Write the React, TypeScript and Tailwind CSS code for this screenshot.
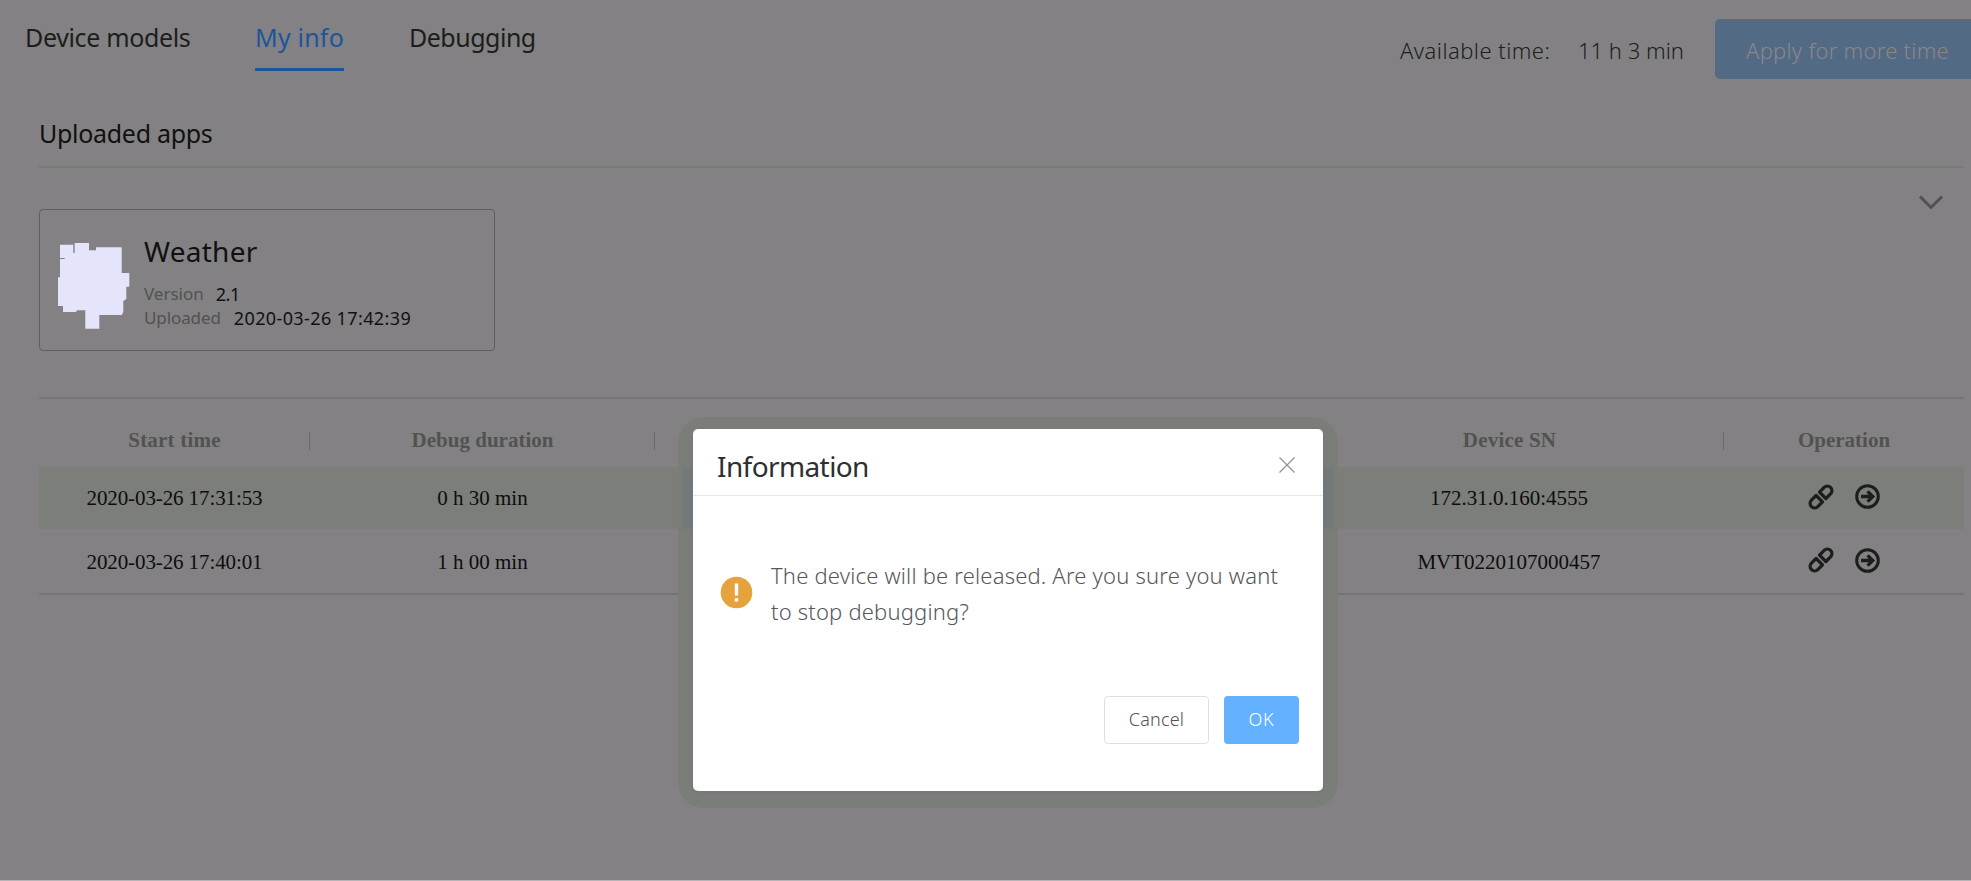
import type { ReactNode } from "react";

const sans = "font-['Noto_Sans',sans-serif]";
const serif = "font-['Liberation_Serif',serif]";

function LinkIcon() {
  return (
    <svg width="26" height="26" viewBox="-13 -13 26 26" fill="none" stroke="#1c1e1c" strokeWidth="3.3" strokeLinejoin="round">
      <g transform="rotate(-45)">
        <path d="M-2.4 -4.5H-9a4.5 4.5 0 0 0 0 9H-2.4Z" />
        <path d="M2.4 -4.5H9a4.5 4.5 0 0 1 0 9H2.4Z" />
      </g>
    </svg>
  );
}

function EnterIcon() {
  return (
    <svg width="25" height="25" viewBox="0 0 25 25" fill="none" stroke="#1c1e1c" strokeWidth="3">
      <circle cx="12.5" cy="12.5" r="10.8" />
      <path d="M6 12.5h11.5M12.6 7.300l5.200 5.200-5.200 5.200" strokeWidth="3.3" />
    </svg>
  );
}

function HeadCell({ children, last }: { children?: ReactNode; last?: boolean }) {
  return (
    <div className="relative flex justify-center pt-[29px] leading-6 font-bold text-[#50534f]">
      {children}
      {!last && <span className="absolute right-0 top-[33px] h-[18px] w-px bg-[#686b68]" />}
    </div>
  );
}

const columns = "grid grid-cols-[271px_345px_640px_429px_240px]";

function Row({ start, duration, sn, active }: { start: string; duration: string; sn: string; active?: boolean }) {
  return (
    <div className={`${columns} items-center justify-items-center text-[#0d0d0d] ${active ? "h-[62px] bg-[#7b7e79]" : "h-[64px] pt-px"}`}>
      <span className="tracking-[-0.1px]">{start}</span>
      <span>{duration}</span>
      <span />
      <span className="-ml-px">{sn}</span>
      <span className="-ml-px flex items-center gap-[21px] pb-[3px]">
        <LinkIcon />
        <EnterIcon />
      </span>
    </div>
  );
}

export default function App() {
  return (
    <div className={`relative h-[881px] w-[1971px] overflow-hidden border-b border-[#b5b3b5] bg-[#848184] ${sans}`}>
      <header className="flex h-[104px] items-start">
        <nav className="flex pt-[19px] text-[25px] leading-9 text-[#1b1e1b]">
          <a className="ml-[25px] w-[230px] tracking-[-0.35px]">Device models</a>
          <a className="mr-[65px] w-[89px] whitespace-nowrap border-b-[3px] border-[#1c559c] pb-[13px] tracking-[0.2px] text-[#1c559c]">My info</a>
          <a className="tracking-[-0.5px]">Debugging</a>
        </nav>
        <div className="ml-auto flex h-[60px] shrink-0 mt-[19px] text-[22px] leading-[62px] text-[#1b1e1b]">
          <span className="w-[178px] font-[350] tracking-[0.45px]">Available time:</span>
          <span className="w-[137px] font-[350] tracking-[0px]">11 h 3 min</span>
          <button className="-mr-2 w-[264px] rounded-[5px] bg-[#536a84] pl-[31px] text-left font-light tracking-[0.25px] text-[#8a8789]">Apply for more time</button>
        </div>
      </header>

      <main className="ml-[39px] w-[1925px]">
        <h2 className="h-[64px] border-b-2 border-[#777976] pt-[11px] text-[25px] leading-9 tracking-[-0.3px] text-[#101110]">Uploaded apps</h2>

        <section className="flex h-[229px] items-start justify-between pt-[41px]">
          <article className="flex h-[142px] w-[456px] rounded-[4px] border border-[#5f5d60] pl-[18px] pt-[23px]">
            <svg className="mt-[10px] shrink-0" width="72" height="86" viewBox="0 0 72 86" fill="#e4e4fa">
              <path d="M2 1.7H15.3V10h1.4V0H31V7.3h7V4.3H63.7V30H71.3V43.7H68.3V56L65.3 58V69L63.7 72H41.3V85.7H27.3V67.3H19L18 69H5V63H0V34.3H2V16H6.700V15H2Z" />
            </svg>
            <div className="ml-[14px] text-[17px] leading-6">
              <h3 className="text-[28px] leading-9 tracking-[0.25px] text-[#101110]">Weather</h3>
              <p className="mt-[13px] flex gap-[12px] text-[#50534f]">
                Version<span className="text-[18px] tracking-[-0.5px] text-[#101110]">2.1</span>
              </p>
              <p className="flex gap-[13px] text-[#50534f]">
                <span className="tracking-[-0.1px]">Uploaded</span>
                <span className="text-[18px] tracking-[0.38px] text-[#101110]">2020-03-26 17:42:39</span>
              </p>
            </div>
          </article>
          <svg className="mr-[20px] -mt-[15px]" width="26" height="16" viewBox="0 0 26 16" fill="none" stroke="#505250" strokeWidth="3">
            <path d="M2 2.500L13 13.500L24 2.500" />
          </svg>
        </section>

        <section className={`border-y-2 border-[#747674] text-[21px] leading-6 ${serif}`}>
          <div className={`${columns} h-[68px]`}>
            <HeadCell><span className="tracking-[0.2px]">Start time</span></HeadCell>
            <HeadCell>Debug duration</HeadCell>
            <HeadCell />
            <HeadCell><span className="tracking-[0.2px]">Device SN</span></HeadCell>
            <HeadCell last>Operation</HeadCell>
          </div>
          <Row start="2020-03-26 17:31:53" duration="0 h 30 min" sn="172.31.0.160:4555" active />
          <Row start="2020-03-26 17:40:01" duration="1 h 00 min" sn="MVT0220107000457" />
        </section>
      </main>

      <div className="absolute left-[678px] top-[417px] h-[391px] w-[660px] rounded-[26px] bg-[#7b7d79]" />
      <div className="absolute left-[683px] top-[467px] h-[62px] w-[650px] bg-[#73787b]" />
      <div role="dialog" className="absolute left-[693px] top-[429px] h-[362px] w-[630px] rounded-[5px] bg-white shadow-[0_1px_3px_#75737a]">
        <div className="flex h-[67px] items-start justify-between border-b border-[#e4e6e8] pl-[24px] pr-[28px]">
          <h2 className="pt-[19px] text-[28px] leading-9 tracking-[-0.6px] text-[#2d2f30]">Information</h2>
          <svg className="mt-[28px]" width="16" height="16" viewBox="0 0 16 16" stroke="#909399" strokeWidth="1.300">
            <path d="M0.500 0.500L15.500 15.500M15.500 0.500L0.500 15.500" />
          </svg>
        </div>
        <div className="flex items-center gap-[18px] pl-[27px] pt-[61px]">
          <svg className="-mt-px" width="33" height="33" viewBox="0 0 33 33">
            <circle cx="16.500" cy="16.500" r="15.800" fill="#e6a23c" />
            <path d="M14.800 7.500h3.400v12h-3.400ZM14.800 22.300h3.400v3.200h-3.400Z" fill="#fff" />
          </svg>
          <p className="whitespace-nowrap text-[22px] font-light leading-9 tracking-[0.19px] text-[#55575a]">
            The device will be released. Are you sure you want
            <br />
            to stop debugging?
          </p>
        </div>
        <div className="flex justify-end gap-[15px] pr-[24px] pt-[67px] text-[18px]">
          <button className="h-[48px] w-[105px] rounded-[4px] border border-[#dcdfe6] pb-px font-[350] tracking-[0.2px] text-[#505256]">Cancel</button>
          <button className="h-[48px] w-[75px] rounded-[4px] bg-[#63b1ff] pb-px font-light tracking-[0.8px] text-white">OK</button>
        </div>
      </div>
    </div>
  );
}
